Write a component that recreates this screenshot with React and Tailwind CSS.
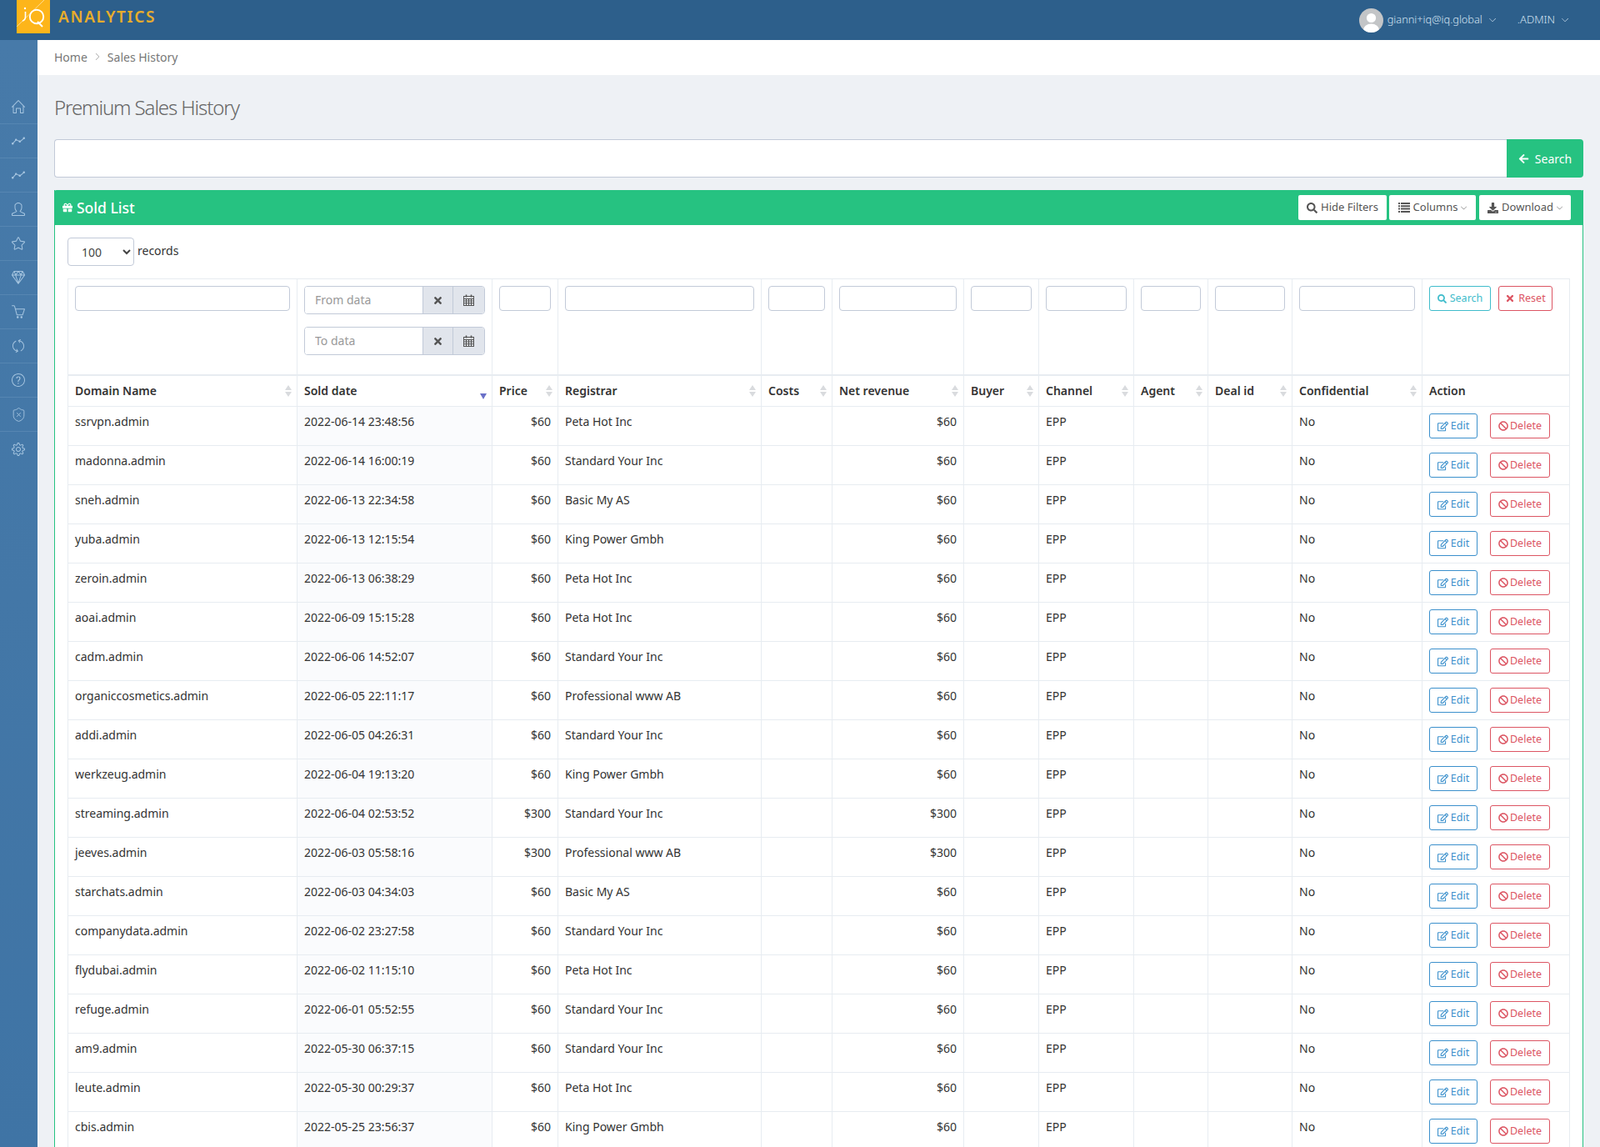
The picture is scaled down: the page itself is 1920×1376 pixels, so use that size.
import React from "react";
import { SlHome, SlGraph, SlUser, SlStar, SlDiamond, SlBasket, SlRefresh, SlQuestion, SlSettings, SlArrowDown, SlArrowRight } from "react-icons/sl";
import { ShieldX } from "lucide-react";
import { FaGift, FaSearch, FaDownload, FaArrowLeft, FaTimes, FaRegEdit, FaBan } from "react-icons/fa";

const rows = [
  ["ssrvpn.admin","2022-06-14 23:48:56","$60","Peta Hot Inc"],
  ["madonna.admin","2022-06-14 16:00:19","$60","Standard Your Inc"],
  ["sneh.admin","2022-06-13 22:34:58","$60","Basic My AS"],
  ["yuba.admin","2022-06-13 12:15:54","$60","King Power Gmbh"],
  ["zeroin.admin","2022-06-13 06:38:29","$60","Peta Hot Inc"],
  ["aoai.admin","2022-06-09 15:15:28","$60","Peta Hot Inc"],
  ["cadm.admin","2022-06-06 14:52:07","$60","Standard Your Inc"],
  ["organiccosmetics.admin","2022-06-05 22:11:17","$60","Professional www AB"],
  ["addi.admin","2022-06-05 04:26:31","$60","Standard Your Inc"],
  ["werkzeug.admin","2022-06-04 19:13:20","$60","King Power Gmbh"],
  ["streaming.admin","2022-06-04 02:53:52","$300","Standard Your Inc"],
  ["jeeves.admin","2022-06-03 05:58:16","$300","Professional www AB"],
  ["starchats.admin","2022-06-03 04:34:03","$60","Basic My AS"],
  ["companydata.admin","2022-06-02 23:27:58","$60","Standard Your Inc"],
  ["flydubai.admin","2022-06-02 11:15:10","$60","Peta Hot Inc"],
  ["refuge.admin","2022-06-01 05:52:55","$60","Standard Your Inc"],
  ["am9.admin","2022-05-30 06:37:15","$60","Standard Your Inc"],
  ["leute.admin","2022-05-30 00:29:37","$60","Peta Hot Inc"],
  ["cbis.admin","2022-05-25 23:56:37","$60","King Power Gmbh"],
];

const widths = [275, 234, 79, 244, 85, 158, 90, 114, 89, 101, 156, 177];
const heads = ["Domain Name","Sold date","Price","Registrar","Costs","Net revenue","Buyer","Channel","Agent","Deal id","Confidential","Action"];

const sideIcons = [
  <SlHome />, <SlGraph />, <SlGraph />, <SlUser />, <SlStar />, <SlDiamond />, <SlBasket />, <SlRefresh />, <SlQuestion />,
  <ShieldX size={19} strokeWidth={1.15} />, <SlSettings />,
];

function Calendar() {
  return (
    <svg width="13" height="14" viewBox="0 0 13 14" fill="none" stroke="#555" strokeWidth="1">
      <rect x="0.5" y="2.5" width="12" height="11" />
      <path d="M0.5 5.5h12M0.5 8h12M0.5 10.7h12M3.5 5.5v8M6.5 5.5v8M9.5 5.5v8" />
      <path d="M3.5 0.5v3M9.5 0.5v3" strokeWidth="1.6" />
    </svg>
  );
}

function ListIcon() {
  return (
    <svg width="14" height="12" viewBox="0 0 14 12" fill="#555">
      <path d="M0 0h2v2H0zM3 0h11v2H3zM0 3.3h2v2H0zM3 3.3h11v2H3zM0 6.6h2v2H0zM3 6.6h11v2H3zM0 10h2v2H0zM3 10h11v2H3z" />
    </svg>
  );
}

function Sort({ active }) {
  return (
    <span className="flex flex-col gap-[2px] w-[8px] shrink-0">
      {active ? (
        <span className="mt-[14px] w-0 h-0 border-x-[4px] border-x-transparent border-t-[7px] border-t-[#6a70c8]" />
      ) : (
        <>
          <span className="w-0 h-0 border-x-[4px] border-x-transparent border-b-[6px] border-b-[#d9dbde]" />
          <span className="w-0 h-0 border-x-[4px] border-x-transparent border-t-[6px] border-t-[#d9dbde]" />
        </>
      )}
    </span>
  );
}

function FilterInput() {
  return <input className="block w-full h-[30px] bg-white border border-[#c2cad8] rounded-[4px]" />;
}

function DateInput({ placeholder }) {
  return (
    <div className="flex h-[34px] w-[217px] border border-[#c2cad8] rounded-[4px] overflow-hidden">
      <input placeholder={placeholder} className="w-[141px] h-full px-3 pb-[1px] text-[14px] text-[#555] placeholder:text-[#999] bg-white outline-none" />
      <span className="w-[36px] flex items-center justify-center bg-[#e1e5ec] border-l border-[#c2cad8] text-[#555] text-[13px]"><FaTimes /></span>
      <span className="flex-1 flex items-center justify-center bg-[#e1e5ec] border-l border-[#c2cad8]"><Calendar /></span>
    </div>
  );
}

export default function App() {
  return (
    <div className="h-[1376px] overflow-hidden flex flex-col bg-[#eef1f5] text-[#333] text-[14px] font-['Open_Sans',sans-serif]">
      <header className="h-[48px] shrink-0 bg-[#2d5f8b] flex items-center pl-[20px] pr-[38px]">
        <div className="self-start">
          <svg width="40" height="40" viewBox="0 0 40 40">
            <rect width="40" height="40" fill="#fdb51a" />
            <path d="M0 32 L33 0" stroke="#fff" strokeOpacity="0.75" strokeWidth="0.7" />
            <circle cx="10" cy="10" r="1.2" fill="#fff" />
            <path d="M10.5 14 V20 Q10.5 24 7 25" stroke="#fff" strokeWidth="1.6" fill="none" />
            <circle cx="24" cy="20" r="8.2" stroke="#fff" strokeWidth="1.9" fill="none" />
            <path d="M25 26 L31 32" stroke="#fff" strokeWidth="1.9" />
          </svg>
        </div>
        <span className="ml-[10px] mb-[8px] text-[#e8ad2c] text-[19px] font-['Lato',sans-serif] font-semibold tracking-[1.65px] leading-none">ANALYTICS</span>
        <div className="ml-auto flex items-center text-[12.75px] font-light text-[#d3e2f1]">
          <span className="w-[29px] h-[29px] rounded-full bg-[#c3c5c7] overflow-hidden relative mr-[5px]">
            <svg width="29" height="29" viewBox="0 0 29 29">
              <circle cx="14.5" cy="11.5" r="5.6" fill="#fff" />
              <ellipse cx="14.5" cy="26" rx="9.5" ry="7.5" fill="#fff" />
            </svg>
          </span>
          <span>gianni+iq@iq.global</span>
          <SlArrowDown className="ml-[8px] text-[8px]" />
          <span className="ml-[26px] text-[13px]">.ADMIN</span>
          <SlArrowDown className="ml-[8px] text-[8px]" />
        </div>
      </header>
      <div className="flex-1 flex min-h-0">
        <aside className="w-[45px] shrink-0 pt-[60px] bg-gradient-to-b from-[#477aa9] to-[#3f74a5] text-[#a6c5e0]">
          {sideIcons.map((ic, i) => (
            <div key={i} className={`h-[41px] pr-[1px] flex items-center justify-center text-[16px] ${i < 10 ? "border-b border-[#5686b2]" : ""}`}>{ic}</div>
          ))}
        </aside>
        <main className="flex-1 min-w-0">
          <div className="h-[42px] pb-[2px] bg-white flex items-center pl-[20px] text-[14px] text-[#777]">
            <span>Home</span>
            <SlArrowRight className="ml-[8px] mr-[8px] text-[8px] text-[#999]" />
            <span>Sales History</span>
          </div>
          <div className="px-[20px]">
            <h1 className="mt-[24px] text-[24px] leading-[30px] font-light tracking-[-1.1px] text-[#666]">Premium Sales History</h1>
            <div className="mt-[23px] flex h-[46px]">
              <input className="flex-1 bg-white border border-[#c2cad8] border-r-0 rounded-l-[4px]" />
              <button className="w-[92px] bg-[#26c281] text-white rounded-r-[4px] flex items-center justify-center gap-[7px]">
                <FaArrowLeft className="text-[13px]" /><span>Search</span>
              </button>
            </div>
            <section className="mt-[15px] border-x border-[#26c281] bg-white">
              <div className="h-[42px] -mx-px bg-[#26c281] rounded-t-[3px] flex items-center pl-[10px] pr-[15px] text-white">
                <FaGift className="text-[12px]" />
                <span className="ml-[5px] text-[17.5px] font-medium">Sold List</span>
                <div className="ml-auto flex gap-[3px] text-[#555] text-[13px]">
                  <button className="h-[30px] w-[106px] bg-white rounded-[2px] flex items-center justify-center gap-[4px]"><FaSearch className="text-[13px]" />Hide Filters</button>
                  <button className="h-[30px] w-[104px] bg-white rounded-[2px] flex items-center justify-center gap-[4px]"><ListIcon />Columns<SlArrowDown className="text-[7px]" /></button>
                  <button className="h-[30px] w-[110px] bg-white rounded-[2px] flex items-center justify-center gap-[4px] ml-[1px]"><FaDownload className="text-[13px]" />Download<SlArrowDown className="text-[7px]" /></button>
                </div>
              </div>
              <div className="px-[15px] pt-[15px]">
                <div className="flex items-start h-[49px]">
                  <select defaultValue="100" className="w-[80px] h-[34px] pl-[12px] bg-white border border-[#c2cad8] rounded-[4px] text-[14px] text-[#444]">
                    <option value="100">100</option>
                  </select>
                  <span className="ml-[4px] mt-[5px]">records</span>
                </div>
                <table className="table-fixed border-collapse w-[1802px]">
                  <colgroup>{widths.map((w, i) => <col key={i} style={{ width: w }} />)}</colgroup>
                  <thead>
                    <tr className="h-[115px] align-top">
                      <td className="border border-[#e7ecf1] p-[8px]"><FilterInput /></td>
                      <td className="border border-[#e7ecf1] p-[8px]">
                        <div className="flex flex-col gap-[15px]">
                          <DateInput placeholder="From data" />
                          <DateInput placeholder="To data" />
                        </div>
                      </td>
                      {[2,3,4,5,6,7,8,9,10].map((i) => (
                        <td key={i} className="border border-[#e7ecf1] p-[8px]"><FilterInput /></td>
                      ))}
                      <td className="border border-[#e7ecf1] p-[8px]">
                        <div className="flex gap-[9px] text-[12.5px]">
                          <button className="h-[30px] w-[74px] border border-[#3fbccb] text-[#3fbccb] rounded-[3px] flex items-center justify-center gap-[4px]"><FaSearch className="text-[11px]" />Search</button>
                          <button className="h-[30px] w-[65px] border border-[#dc5563] text-[#dc5563] rounded-[3px] flex items-center justify-center gap-[4px]"><FaTimes className="text-[12px]" />Reset</button>
                        </div>
                      </td>
                    </tr>
                    <tr className="h-[38px]">
                      {heads.map((h, i) => (
                        <th key={h} className="border border-[#e7ecf1] border-t-2 pl-[8px] pr-[6px] text-left font-semibold">
                          <div className="flex items-center justify-between">
                            <span>{h}</span>
                            {i < 11 && <Sort active={i === 1} />}
                          </div>
                        </th>
                      ))}
                    </tr>
                  </thead>
                  <tbody>
                    {rows.map((r) => (
                      <tr key={r[0]} className="h-[47px] align-top">
                        <td className="border border-[#e7ecf1] p-[8px] leading-[20px]">{r[0]}</td>
                        <td className="border border-[#e7ecf1] p-[8px] leading-[20px] bg-[#fafbfd]">{r[1]}</td>
                        <td className="border border-[#e7ecf1] p-[8px] leading-[20px] text-right">{r[2]}</td>
                        <td className="border border-[#e7ecf1] p-[8px] leading-[20px]">{r[3]}</td>
                        <td className="border border-[#e7ecf1] p-[8px]"></td>
                        <td className="border border-[#e7ecf1] p-[8px] leading-[20px] text-right">{r[2]}</td>
                        <td className="border border-[#e7ecf1] p-[8px]"></td>
                        <td className="border border-[#e7ecf1] p-[8px] leading-[20px]">EPP</td>
                        <td className="border border-[#e7ecf1] p-[8px]"></td>
                        <td className="border border-[#e7ecf1] p-[8px]"></td>
                        <td className="border border-[#e7ecf1] p-[8px] leading-[20px]">No</td>
                        <td className="border border-[#e7ecf1] p-[8px]">
                          <div className="flex gap-[15px] text-[12.5px]">
                            <button className="h-[30px] w-[58px] border border-[#3b90cc] text-[#3b90cc] rounded-[3px] flex items-center justify-center gap-[3px]"><FaRegEdit className="text-[13px]" />Edit</button>
                            <button className="h-[30px] w-[72px] border border-[#dc5563] text-[#dc5563] rounded-[3px] flex items-center justify-center gap-[2px]"><FaBan className="text-[12px]" />Delete</button>
                          </div>
                        </td>
                      </tr>
                    ))}
                  </tbody>
                </table>
              </div>
            </section>
          </div>
        </main>
      </div>
    </div>
  );
}
